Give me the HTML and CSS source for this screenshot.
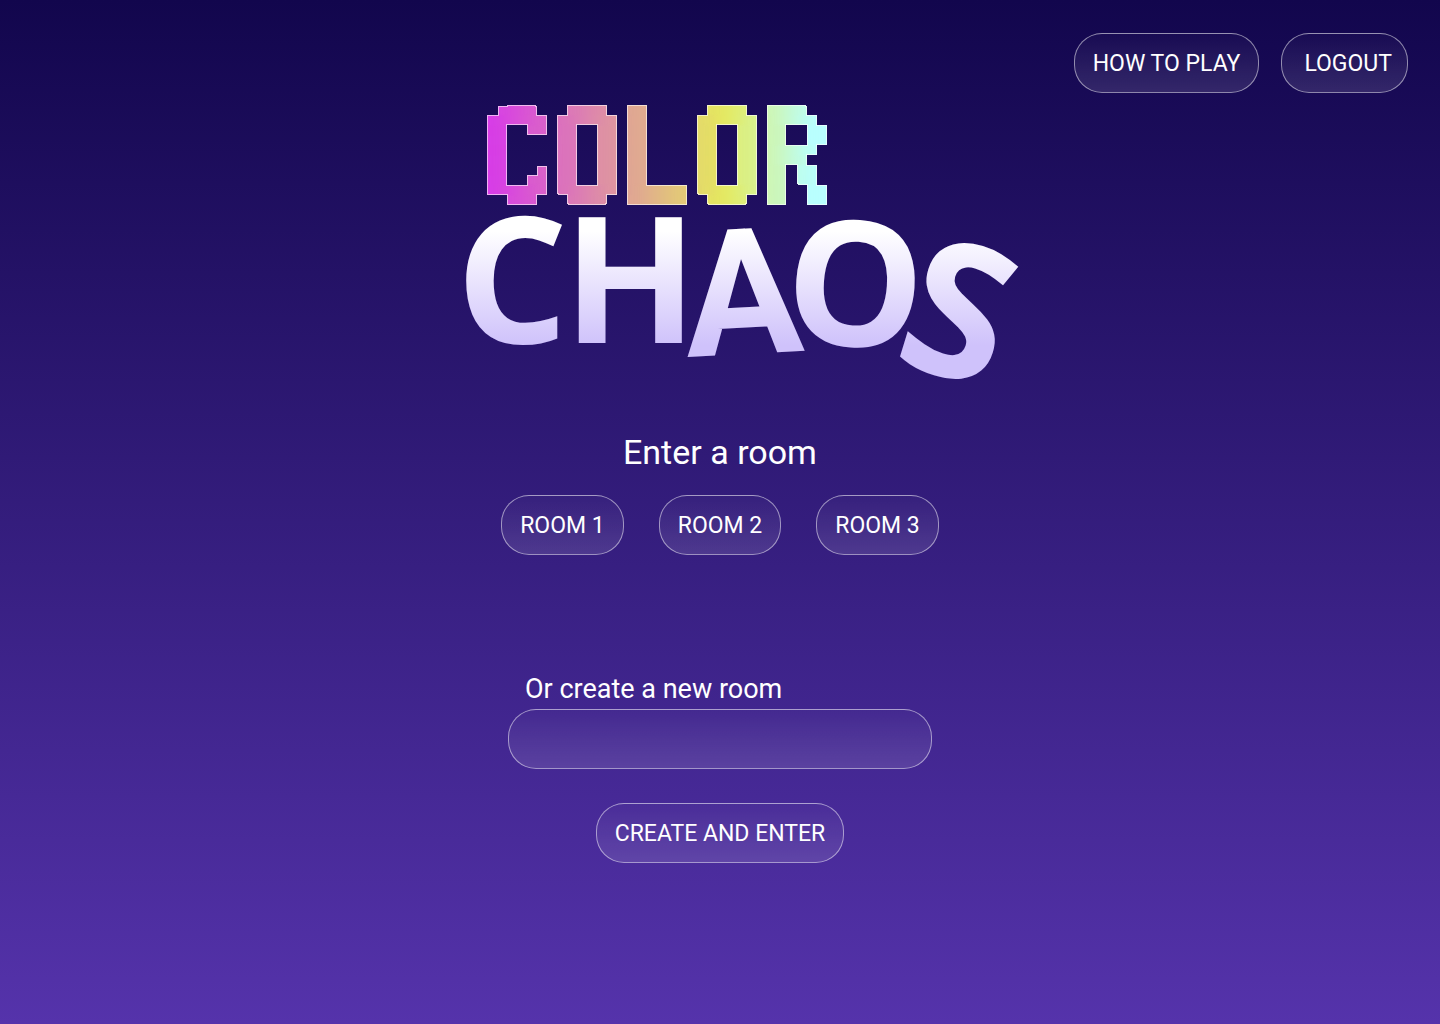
FILE: index.html
```html
<!DOCTYPE html>
<html lang="en">
<head>
<meta charset="utf-8">
<meta name="viewport" content="width=device-width, initial-scale=1">
<title>Color Chaos</title>
<link rel="stylesheet" href="styles.css">
</head>
<body>
<header class="topbar">
  <button class="pill" type="button">HOW TO PLAY</button>
  <button class="pill pill-logout" type="button">LOGOUT</button>
</header>
<main class="lobby">
  <h1 class="logo">
    <svg class="logo-art" viewBox="-40 -20 680 340">
      <defs>
        <linearGradient id="rainbow" gradientUnits="userSpaceOnUse" x1="67" y1="0" x2="407" y2="0">
          <stop offset="0" stop-color="#d637ea"/>
          <stop offset="0.7" stop-color="#e5ea5c"/>
          <stop offset="0.96" stop-color="#b8ffff"/>
        </linearGradient>
        <linearGradient id="frost" gradientUnits="userSpaceOnUse" x1="0" y1="136" x2="0" y2="250">
          <stop offset="0" stop-color="#ffffff"/>
          <stop offset="1" stop-color="#cfc2fb"/>
        </linearGradient>
        <!-- samples the lettering once per 10px cell, grows each sample into a full cell,
             and keeps every seventh column empty between the letters -->
        <filter id="pixels" filterUnits="userSpaceOnUse" x="47" y="0" width="380" height="120" color-interpolation-filters="sRGB">
          <feFlood x="127" y="0" width="10" height="120" flood-color="#fff" result="gap"/>
          <feOffset in="gap" dx="0" dy="0" x="67" y="0" width="70" height="120"/>
          <feTile result="gaps"/>
          <feFlood x="71" y="14" width="2" height="2" flood-color="#fff" result="dot"/>
          <feOffset in="dot" dx="0" dy="0" x="67" y="10" width="10" height="10"/>
          <feTile result="dots"/>
          <feComposite in="SourceGraphic" in2="dots" operator="in"/>
          <feComposite in2="gaps" operator="out"/>
          <feMorphology operator="dilate" radius="4"/>
          <feComponentTransfer result="cells"><feFuncA type="discrete" tableValues="0 1"/></feComponentTransfer>
          <feGaussianBlur in="cells" stdDeviation="7 1"/>
          <feComponentTransfer result="wash"><feFuncA type="linear" slope="200"/></feComponentTransfer>
          <feComposite in="wash" in2="cells" operator="in" result="body"/>
          <feMorphology in="cells" operator="erode" radius="1" result="inner"/>
          <feFlood flood-color="#fff" flood-opacity="0.6"/>
          <feComposite in2="cells" operator="in"/>
          <feComposite in2="inner" operator="out" result="rim"/>
          <feMerge><feMergeNode in="body"/><feMergeNode in="rim"/></feMerge>
        </filter>
      </defs>
      <text class="logo-color" x="56 128 194 268 335" y="106 107 107 107 107" filter="url(#pixels)"><tspan class="logo-heavy">C</tspan>OLO<tspan class="logo-r">R</tspan></text>
      <text class="logo-chaos" x="36 143 267 362 470" y="248 248 262 246 265" rotate="0 0 -3 4 17">CH<tspan class="logo-a">A</tspan><tspan class="logo-o">O</tspan><tspan class="logo-s">S</tspan></text>
    </svg>
  </h1>
  <section class="rooms">
    <h2 class="rooms-title">Enter a room</h2>
    <div class="rooms-list">
      <button class="pill" type="button">ROOM 1</button>
      <button class="pill" type="button">ROOM 2</button>
      <button class="pill" type="button">ROOM 3</button>
    </div>
  </section>
  <form class="create">
    <label class="create-label" for="room-name">Or create a new room</label>
    <input class="create-input" id="room-name" type="text">
    <button class="pill" type="button">CREATE AND ENTER</button>
  </form>
</main>
</body>
</html>
```

FILE: styles.css
```css
* {
  box-sizing: border-box;
}

body {
  margin: 0;
  min-height: 100vh;
  color: #fff;
  font-family: Roboto, sans-serif;
  background: linear-gradient(#12064d, #5533ab);
}

.topbar {
  display: flex;
  justify-content: flex-end;
  gap: 22px;
  padding: 33px 32px 0;
}

.pill,
.create-input {
  height: 60px;
  border: 1px solid rgba(255, 255, 255, 0.5);
  border-radius: 28px;
  color: inherit;
  font: 400 23px/28px Roboto, sans-serif;
  background: linear-gradient(rgba(255, 255, 255, 0.02), rgba(255, 255, 255, 0.12));
}

.pill {
  padding: 2px 18px 0;
  cursor: pointer;
}

.pill-logout {
  padding: 2px 15px 0 22px;
}

.lobby {
  display: flex;
  flex-direction: column;
  align-items: center;
}

.logo {
  margin: -18px 0 0;
  line-height: 0;
}

.logo-art {
  width: 680px;
  max-width: 100%;
}

.logo-color {
  font: 700 130px "DejaVu Sans Mono", monospace;
  fill: url(#rainbow);
}

.logo-heavy {
  font: 700 138px "Liberation Mono", monospace;
  stroke: url(#rainbow);
  stroke-width: 2px;
}

.logo-r {
  font-size: 128px;
}

.logo-chaos {
  font: 700 176px "Open Sans", sans-serif;
  fill: url(#frost);
}

.logo-a {
  font-family: Roboto, sans-serif;
}

.logo-o {
  font-size: 174px;
}

.logo-s {
  font-size: 188px;
}

.rooms {
  display: flex;
  flex-direction: column;
  align-items: center;
  gap: 22px;
  padding-top: 16px;
}

.rooms-title {
  margin: 0;
  font-size: 34px;
  font-weight: 400;
  line-height: 42px;
}

.rooms-list {
  display: flex;
  gap: 35px;
}

.create {
  display: flex;
  flex-direction: column;
  align-items: center;
  width: 424px;
  max-width: 100%;
  padding-top: 117px;
}

.create-label {
  align-self: flex-start;
  padding: 0 17px;
  font-size: 27px;
  line-height: 34px;
}

.create-input {
  width: 100%;
  margin: 3px 0 34px;
  padding: 0 18px;
}
```
